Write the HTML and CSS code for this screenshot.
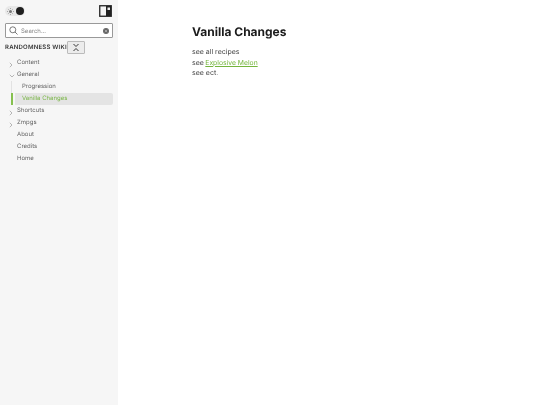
FILE: index.html
```html
<!DOCTYPE html>
<html lang="en">
<head>
<meta charset="utf-8">
<title>Vanilla Changes</title>
<link rel="stylesheet" href="styles.css">
</head>
<body>
<aside class="sidebar">
  <div class="topbar">
    <div class="theme">
      <span class="theme-light"><svg width="7" height="7" viewBox="0 0 7 7"><circle cx="3.5" cy="3.5" r="1.500" fill="#777"/><path d="M3.5 0v1M3.5 6v1M0 3.5h1M6 3.5h1M1 1l.7.7M5.3 5.3l.7.7M1 6l.7-.7M5.3 1.700l.7-.7" stroke="#777" stroke-width=".6"/></svg></span>
      <span class="theme-dark"></span>
    </div>
    <svg class="layout-icon" width="13" height="12" viewBox="0 0 13 12"><rect x=".75" y=".75" width="11.500" height="10.500" fill="none" stroke="#222" stroke-width="1.300"/><rect x="7" y="1" width="5" height="10" fill="#222"/><rect x="8.500" y="2.500" width="2.500" height="2.500" fill="#eee"/></svg>
  </div>
  <div class="search">
    <svg width="9" height="9" viewBox="0 0 9 9"><circle cx="3.800" cy="3.800" r="3" fill="none" stroke="#444" stroke-width=".7"/><path d="M6 6l2.500 2.500" stroke="#444" stroke-width=".7"/></svg>
    <span class="search-text">Search...</span>
    <span class="search-clear"><svg width="6" height="6" viewBox="0 0 6 6"><circle cx="3" cy="3" r="3" fill="#666"/><path d="M1.800 1.800l2.400 2.400M4.200 1.800l-2.400 2.400" stroke="#ccc" stroke-width=".6"/></svg></span>
  </div>
  <div class="wiki-row">
    <span class="wiki">RANDOMNESS WIKI</span>
    <button class="collapse"><svg width="8" height="9" viewBox="0 0 8 9"><path d="M1.500 1l2.500 2.500 2.500-2.500M1.500 8l2.500-2.500 2.500 2.500" fill="none" stroke="#222" stroke-width=".9"/></svg></button>
  </div>
  <nav class="nav">
    <div class="item"><svg class="chev" width="4" height="6" viewBox="0 0 4 6"><path d="M.8 .8l2.200 2.200-2.200 2.200" fill="none" stroke="#999" stroke-width=".7"/></svg>Content</div>
    <div class="item"><svg class="chev" width="6" height="4" viewBox="0 0 6 4"><path d="M.8 .8l2.200 2.200 2.200-2.200" fill="none" stroke="#999" stroke-width=".7"/></svg>General</div>
    <div class="children">
      <div class="child">Progression</div>
      <div class="child active">Vanilla Changes</div>
    </div>
    <div class="item"><svg class="chev" width="4" height="6" viewBox="0 0 4 6"><path d="M.8 .8l2.200 2.200-2.200 2.200" fill="none" stroke="#999" stroke-width=".7"/></svg>Shortcuts</div>
    <div class="item"><svg class="chev" width="4" height="6" viewBox="0 0 4 6"><path d="M.8 .8l2.200 2.200-2.200 2.200" fill="none" stroke="#999" stroke-width=".7"/></svg>Zmpgs</div>
    <div class="item">About</div>
    <div class="item">Credits</div>
    <div class="item">Home</div>
  </nav>
</aside>
<main class="content">
  <h1>Vanilla Changes</h1>
  <p>see all recipes</p>
  <p>see <a href="#">Explosive Melon</a></p>
  <p>see ect.</p>
</main>
</body>
</html>
```
FILE: styles.css
```css
* { box-sizing: border-box; }
html, body { height: 100%; }
body {
  margin: 0;
  display: flex;
  background: #fff;
  color: #1c1c1c;
  font-family: Inter, "Liberation Sans", sans-serif;
  text-rendering: geometricPrecision;
  overflow: hidden;
}
.sidebar {
  width: 118px;
  height: 405px;
  background: #f6f6f6;
  padding: 5px 5px 0;
  flex: none;
  will-change: transform;
}
.topbar {
  display: flex;
  justify-content: space-between;
  align-items: center;
  height: 12px;
  margin-bottom: 6px;
  padding-right: 1px;
}
.theme {
  display: flex;
  align-items: center;
  width: 20px;
  height: 10px;
  border-radius: 5px;
  background: #e8e8e8;
}
.theme-light { width: 10px; height: 10px; display: flex; align-items: center; justify-content: center; }
.theme-dark { width: 8px; height: 8px; border-radius: 50%; background: #1f1f1f; margin-left: 1px; }
.layout-icon { display: block; }
.search {
  height: 15px;
  border: 1px solid #999;
  border-radius: 1px;
  background: #fff;
  display: flex;
  align-items: center;
  padding: 0 3px;
}
.search-text { font-size: 6px; color: #888; margin-left: 3px; padding-top: 1px; flex: 1; }
.search-clear { display: flex; }
.wiki-row {
  display: flex;
  align-items: center;
  height: 14px;
  margin-top: 2px;
  position: relative;
}
.wiki {
  font-size: 6px;
  font-weight: 600;
  letter-spacing: .22px;
  color: #333;
  white-space: nowrap;
  margin-top: 1px;
}
.collapse {
  position: absolute;
  left: 62px;
  top: 1px;
  width: 18px;
  height: 13px;
  padding: 0;
  background: #ececec;
  border: 1px solid #bbb;
  border-radius: 1px;
  display: flex;
  align-items: center;
  justify-content: center;
}
.nav { margin-top: 3px; font-size: 6px; color: #666; }
.item {
  height: 12px;
  line-height: 12px;
  padding-left: 12px;
  position: relative;
}
.chev { position: absolute; left: 4px; top: 5px; }
.children { margin-left: 6px; border-left: 1px solid #e2e2e2; }
.child {
  height: 12px;
  line-height: 12px;
  padding-left: 10px;
}
.active {
  margin-left: -1px;
  border-left: 2px solid #86c04f;
  padding-left: 9px;
  color: #7ab648;
  background: linear-gradient(to right, transparent 2px, #e4e4e4 2px);
  border-radius: 0 2px 2px 0;
}
.content {
  padding: 24px 0 0 74px;
  font-size: 7px;
  line-height: 10.500px;
  color: #444;
  will-change: transform;
}
h1 {
  margin: 0 0 7px;
  font-size: 12px;
  line-height: 16px;
  font-weight: 700;
  color: #1c1c1c;
}
p { margin: 0; }
a {
  color: #74b53c;
  font-size: 6.800px;
  margin-left: -.5px;
  text-decoration-thickness: .6px;
}
```
